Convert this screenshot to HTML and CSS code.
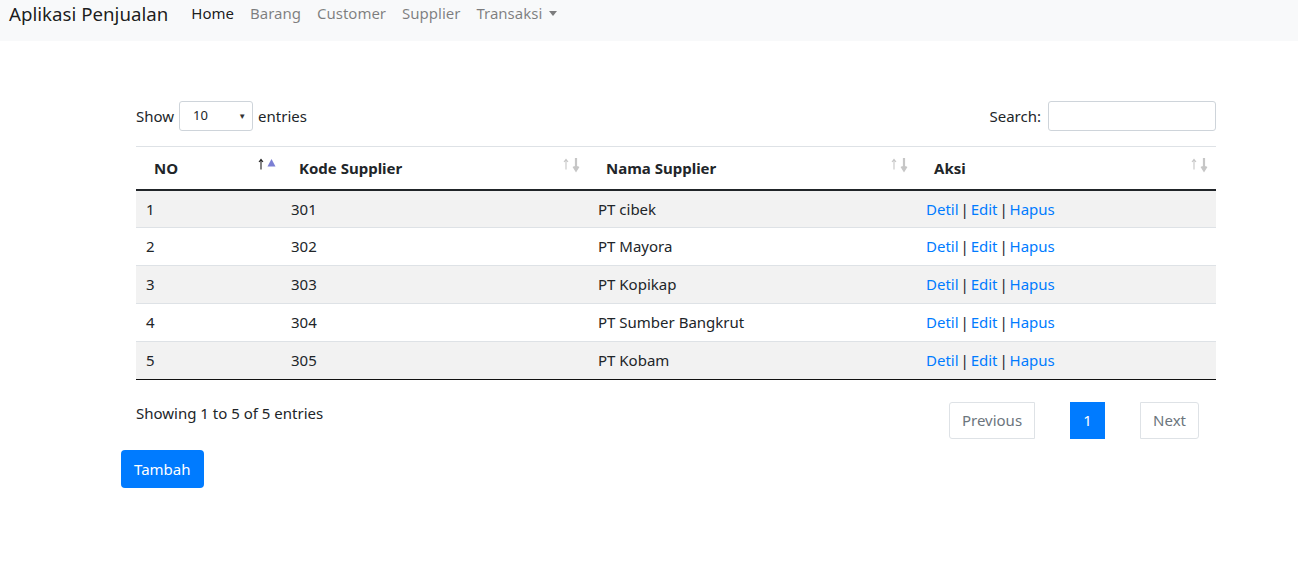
FILE: index.html
```html
<!DOCTYPE html>
<html lang="id">
<head>
<meta charset="utf-8">
<title>Aplikasi Penjualan</title>
<link rel="stylesheet" href="styles.css">
</head>
<body>
<nav class="navbar">
  <a class="brand" href="#">Aplikasi Penjualan</a>
  <ul class="nav">
    <li><a class="nav-link active" href="#">Home</a></li>
    <li><a class="nav-link" href="#">Barang</a></li>
    <li><a class="nav-link" href="#">Customer</a></li>
    <li><a class="nav-link" href="#">Supplier</a></li>
    <li><a class="nav-link dropdown" href="#">Transaksi <span class="caret"></span></a></li>
  </ul>
</nav>
<main class="main">
  <div class="dt-wrapper">
    <div class="dt-top">
      <label class="dt-length">Show
        <span class="select"><span class="select-val">10</span><span class="select-arrow">▼</span></span>
        entries</label>
      <label class="dt-search">Search: <span class="search-input"></span></label>
    </div>
    <table class="table">
      <thead>
        <tr>
          <th class="c1">NO<svg class="sort sort-first" width="20" height="16" viewBox="0 0 20 16"><path d="M3 2.5V12.5M1 5L3 2.5L5 5" fill="none" stroke="#222" stroke-width="1.1"/><path d="M9.5 9.5L13.5 2L17.5 9.5Z" fill="#7b7fd4"/></svg></th>
          <th class="c2">Kode Supplier<svg class="sort" width="20" height="16" viewBox="0 0 20 16"><path d="M3 2.5V12.5M1 5L3 2.5L5 5" fill="none" stroke="#c6c6c6" stroke-width="1.1"/><path d="M13 1V13M10.5 9.5L13 13.5L15.5 9.5" fill="none" stroke="#c6c6c6" stroke-width="2.2"/></svg></th>
          <th class="c3">Nama Supplier<svg class="sort" width="20" height="16" viewBox="0 0 20 16"><path d="M3 2.5V12.5M1 5L3 2.5L5 5" fill="none" stroke="#c6c6c6" stroke-width="1.1"/><path d="M13 1V13M10.5 9.5L13 13.5L15.5 9.5" fill="none" stroke="#c6c6c6" stroke-width="2.2"/></svg></th>
          <th class="c4">Aksi<svg class="sort" width="20" height="16" viewBox="0 0 20 16"><path d="M3 2.5V12.5M1 5L3 2.5L5 5" fill="none" stroke="#c6c6c6" stroke-width="1.1"/><path d="M13 1V13M10.5 9.5L13 13.5L15.5 9.5" fill="none" stroke="#c6c6c6" stroke-width="2.2"/></svg></th>
        </tr>
      </thead>
      <tbody>
        <tr><td>1</td><td>301</td><td>PT cibek</td><td class="aksi"><a href="#">Detil</a> | <a href="#">Edit</a> | <a href="#">Hapus</a></td></tr>
        <tr><td>2</td><td>302</td><td>PT Mayora</td><td class="aksi"><a href="#">Detil</a> | <a href="#">Edit</a> | <a href="#">Hapus</a></td></tr>
        <tr><td>3</td><td>303</td><td>PT Kopikap</td><td class="aksi"><a href="#">Detil</a> | <a href="#">Edit</a> | <a href="#">Hapus</a></td></tr>
        <tr><td>4</td><td>304</td><td>PT Sumber Bangkrut</td><td class="aksi"><a href="#">Detil</a> | <a href="#">Edit</a> | <a href="#">Hapus</a></td></tr>
        <tr><td>5</td><td>305</td><td>PT Kobam</td><td class="aksi"><a href="#">Detil</a> | <a href="#">Edit</a> | <a href="#">Hapus</a></td></tr>
      </tbody>
    </table>
    <div class="dt-bottom">
      <div class="dt-info">Showing 1 to 5 of 5 entries</div>
      <ul class="pagination">
        <li><a class="page prev" href="#">Previous</a></li>
        <li><a class="page current" href="#">1</a></li>
        <li><a class="page next" href="#">Next</a></li>
      </ul>
    </div>
  </div>
  <a class="btn" href="#">Tambah</a>
</main>
</body>
</html>
```

FILE: styles.css
```css
* { box-sizing: border-box; }
html, body { margin: 0; padding: 0; }
body {
  font-family: "Noto Sans", "Open Sans", sans-serif;
  font-size: 15px;
  line-height: 1.5;
  color: #212529;
  background: #fff;
}
a { text-decoration: none; }

.navbar {
  display: flex;
  align-items: flex-start;
  height: 41px;
  background: #f8f9fa;
  padding: 0 9px;
}
.brand {
  font-size: 18.7px;
  line-height: 27px;
  color: rgba(0,0,0,.9);
  margin-right: 15px;
}
.nav {
  list-style: none;
  margin: 0;
  padding: 0;
  display: flex;
}
.nav-link {
  display: block;
  padding: 0 8px;
  line-height: 27px;
  font-size: 15px;
  color: rgba(0,0,0,.5);
}
.nav-link.active { color: rgba(0,0,0,.9); }
.caret {
  display: inline-block;
  width: 0; height: 0;
  margin-left: 3px;
  vertical-align: 3px;
  border-top: 5px solid rgba(0,0,0,.5);
  border-left: 4.5px solid transparent;
  border-right: 4.5px solid transparent;
}

.main {
  padding: 60px 0 0 121px;
}
.dt-wrapper {
  width: 1110px;
  padding: 0 15px;
}
.dt-top {
  display: flex;
  justify-content: space-between;
  align-items: center;
  height: 30px;
}
.dt-length, .dt-search {
  display: flex;
  align-items: center;
  gap: 5px;
  font-size: 15px;
}
.select {
  display: flex;
  align-items: center;
  justify-content: space-between;
  width: 74px;
  height: 30px;
  border: 1px solid #ced4da;
  border-radius: 3px;
  padding: 0 6px 0 13px;
  font-size: 13px;
}
.select-arrow { font-size: 8px; color: #333; }
.search-input {
  display: block;
  width: 168px;
  height: 30px;
  border: 1px solid #ced4da;
  border-radius: 3px;
  margin-left: 2px;
}

.table {
  width: 1080px;
  border-collapse: collapse;
  margin-top: 15px;
  table-layout: fixed;
}
.table th {
  position: relative;
  text-align: left;
  font-weight: 700;
  font-size: 15px;
  height: 43px;
  padding: 0 18px;
  border-top: 1px solid #dee2e6;
  border-bottom: 2px solid #212529;
  vertical-align: middle;
}
.c1 { width: 145px; }
.c2 { width: 307px; }
.c3 { width: 328px; }
.c4 { width: 300px; }
.sort {
  position: absolute;
  right: 5px;
  top: 10px;
}
.sort.sort-first { right: 3px; }
.table td {
  height: 38px;
  padding: 0 10px;
  border-top: 1px solid #dee2e6;
  vertical-align: middle;
  font-size: 15px;
}
.table tbody tr:first-child td { border-top: none; }
.table tbody tr:nth-child(odd) { background: #f2f2f2; }
.table tbody tr:last-child td { border-bottom: 1px solid #111; }
.table td a { color: #007bff; }
.table td.aksi { word-spacing: -2px; }

.dt-bottom {
  display: flex;
  justify-content: space-between;
  align-items: flex-start;
  padding-top: 21px;
}
.dt-info { font-size: 15px; line-height: 24px; }
.pagination {
  list-style: none;
  margin: 1px 17px 0 0;
  padding: 0;
  display: flex;
  gap: 35px;
}
.page {
  display: block;
  height: 37px;
  line-height: 35px;
  padding: 0 12px;
  border: 1px solid #dee2e6;
  color: #6c757d;
  font-size: 15px;
  background: #fff;
}
.page.prev { border-radius: 3px 0 0 3px; }
.page.next { border-radius: 0 3px 3px 0; }
.page.current {
  background: #007bff;
  border-color: #007bff;
  color: #fff;
  width: 35px;
  text-align: center;
  padding: 0;
}

.btn {
  display: inline-block;
  margin-top: 11px;
  height: 38px;
  line-height: 38px;
  padding: 0 13px;
  background: #007bff;
  color: #fff;
  border-radius: 4px;
  font-size: 15px;
}
```
